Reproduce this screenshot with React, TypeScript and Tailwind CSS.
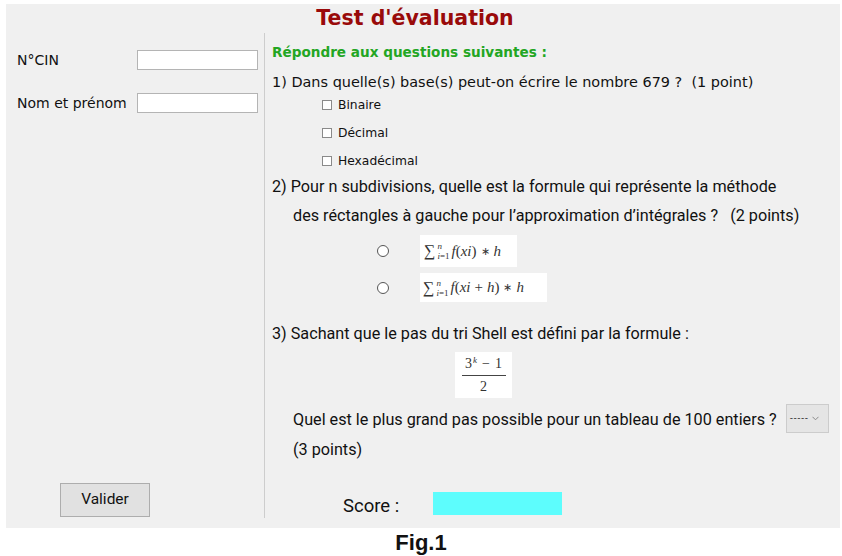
import React from "react";

const dv = "font-['DejaVu_Sans',sans-serif]";
const rb = "font-['Roboto',sans-serif]";
const serif = "font-['Liberation_Serif',serif]";

function CheckRow({ label, className = "" }: { label: string; className?: string }) {
  return (
    <div className={`h-[20px] ml-[50px] flex items-center gap-[6px] ${dv} text-[12.3px] text-[#111] ${className}`}>
      <span className="inline-block w-[10px] h-[10px] border border-[#8a8a8a] bg-white" />
      <span>{label}</span>
    </div>
  );
}

function Radio() {
  return <span className="inline-block w-[12px] h-[12px] rounded-full border-[1.5px] border-[#555] bg-white" />;
}

function SumHead() {
  return (
    <>
      <span className="text-[16px] leading-[18px] not-italic">∑</span>
      <span className="inline-flex flex-col text-[9px] leading-[10px] ml-[2px] mr-[1px]">
        <i>n</i>
        <span>
          <i>i</i>=1
        </span>
      </span>
    </>
  );
}

export default function App() {
  return (
    <div className="w-[842px] h-[556px] bg-white overflow-hidden">
      <div className="ml-[6px] mt-[4px] w-[834px] h-[524px] bg-[#f0f0f0] flex flex-col">
        <div className={`h-[29px] pr-[16px] flex items-center justify-center ${dv} font-bold text-[20.5px] text-[#990a0a]`}>
          Test d'évaluation
        </div>
        <div className="flex flex-1">
          {/* left column */}
          <div className={`w-[258px] flex flex-col pl-[11px] ${dv} text-[14px] text-[#111]`}>
            <div className="mt-[17px] flex items-center h-[20px]">
              <span className="w-[120px]">N°CIN</span>
              <span className="w-[121px] h-[20px] bg-white border border-[#b4b4b4]" />
            </div>
            <div className="mt-[23px] flex items-center h-[20px]">
              <span className="w-[120px]">Nom et prénom</span>
              <span className="w-[121px] h-[20px] bg-white border border-[#b4b4b4]" />
            </div>
            <div className="mt-auto mb-[11px] ml-[43px]">
              <div className={`w-[90px] h-[34px] bg-[#e1e1e1] border border-[#adadad] flex items-center justify-center ${rb} text-[15.5px] text-[#111]`}>
                Valider
              </div>
            </div>
          </div>
          {/* divider */}
          <div className="w-px bg-[#cdcdcd] mb-[10px]" />
          {/* right column */}
          <div className="flex-1 flex flex-col pl-[7px] pt-[7px] text-[#111]">
            <div className={`h-[24px] flex items-center ${dv} font-bold text-[13.6px] text-[#23a623]`}>
              Répondre aux questions suivantes :
            </div>
            <div className={`mt-[7px] h-[24px] flex items-center whitespace-pre ${dv} text-[14.45px]`}>
              1) Dans quelle(s) base(s) peut-on écrire le nombre 679 ?  (1 point)
            </div>
            <CheckRow label="Binaire" />
            <CheckRow label="Décimal" className="mt-[8px]" />
            <CheckRow label="Hexadécimal" className="mt-[8px]" />
            <div className={`mt-[4px] h-[24px] flex items-center whitespace-pre ${rb} text-[16.2px]`}>
              2) Pour n subdivisions, quelle est la formule qui représente la méthode
            </div>
            <div className={`mt-[5px] h-[24px] ml-[21px] flex items-center whitespace-pre ${rb} text-[16.2px]`}>
              des réctangles à gauche pour l’approximation d’intégrales ?   (2 points)
            </div>
            <div className="mt-[7px] ml-[105px] flex items-center">
              <Radio />
              <div className={`ml-[31px] w-[97px] h-[32px] bg-white flex items-center pl-[4px] ${serif} text-[15px] text-[#333]`}>
                <SumHead />
                <i className="ml-[1px]">f</i>
                <span>(</span>
                <i>xi</i>
                <span>)</span>
                <span className="mx-[4px] text-[11px]">∗</span>
                <i>h</i>
              </div>
            </div>
            <div className="mt-[6px] ml-[105px] flex items-center">
              <Radio />
              <div className={`ml-[31px] w-[127px] h-[29px] bg-white flex items-center pl-[3px] ${serif} text-[15px] text-[#333]`}>
                <SumHead />
                <i className="ml-[1px]">f</i>
                <span>(</span>
                <i>xi</i>
                <span className="mx-[4px]">+</span>
                <i>h</i>
                <span>)</span>
                <span className="mx-[4px] text-[11px]">∗</span>
                <i>h</i>
              </div>
            </div>
            <div className={`mt-[20px] h-[24px] flex items-center whitespace-pre ${rb} text-[16.2px]`}>
              3) Sachant que le pas du tri Shell est défini par la formule :
            </div>
            <div className={`mt-[6px] ml-[183px] w-[57px] h-[46px] bg-white flex flex-col items-center justify-center ${serif} text-[14px] text-[#333]`}>
              <div className="leading-[16px] flex items-start">
                <span>3</span>
                <i className="text-[9px] leading-[9px] ml-[1px]">k</i>
                <span className="ml-[5px]">−</span>
                <span className="ml-[5px]">1</span>
              </div>
              <div className="w-[44px] h-px bg-[#444] my-[3px]" />
              <div className="leading-[15px]">2</div>
            </div>
            <div className="mt-[6px] ml-[21px] h-[29px] flex items-center">
              <span className={`pt-[4px] whitespace-pre ${rb} text-[16.2px]`}>
                Quel est le plus grand pas possible pour un tableau de 100 entiers ?
              </span>
              <div className="ml-[9px] w-[43px] h-[29px] bg-[#e5e5e5] border border-[#cccccc] flex items-center pl-[3px]">
                <span className={`${dv} text-[9px] leading-none tracking-[0.5px] text-[#222]`}>-----</span>
                <svg width="7" height="5" viewBox="0 0 7 5" className="ml-[4px]">
                  <path d="M0.5 0.8 L3.5 3.8 L6.5 0.8" fill="none" stroke="#8a8a8a" strokeWidth="1" />
                </svg>
              </div>
            </div>
            <div className={`mt-[5px] ml-[21px] h-[24px] flex items-center ${rb} text-[16.2px]`}>(3 points)</div>
            <div className="mt-[30px] ml-[71px] h-[23px] flex items-center">
              <span className={`pt-[6px] ${rb} text-[18.5px] text-[#111]`}>Score :</span>
              <span className="ml-[34px] w-[129px] h-[23px] bg-[#5dfdfd]" />
            </div>
          </div>
        </div>
      </div>
      <div className="mt-[2px] text-center font-['Liberation_Sans',Arial,sans-serif] font-bold text-[22px] text-[#111] leading-[25px]">
        Fig.1
      </div>
    </div>
  );
}
